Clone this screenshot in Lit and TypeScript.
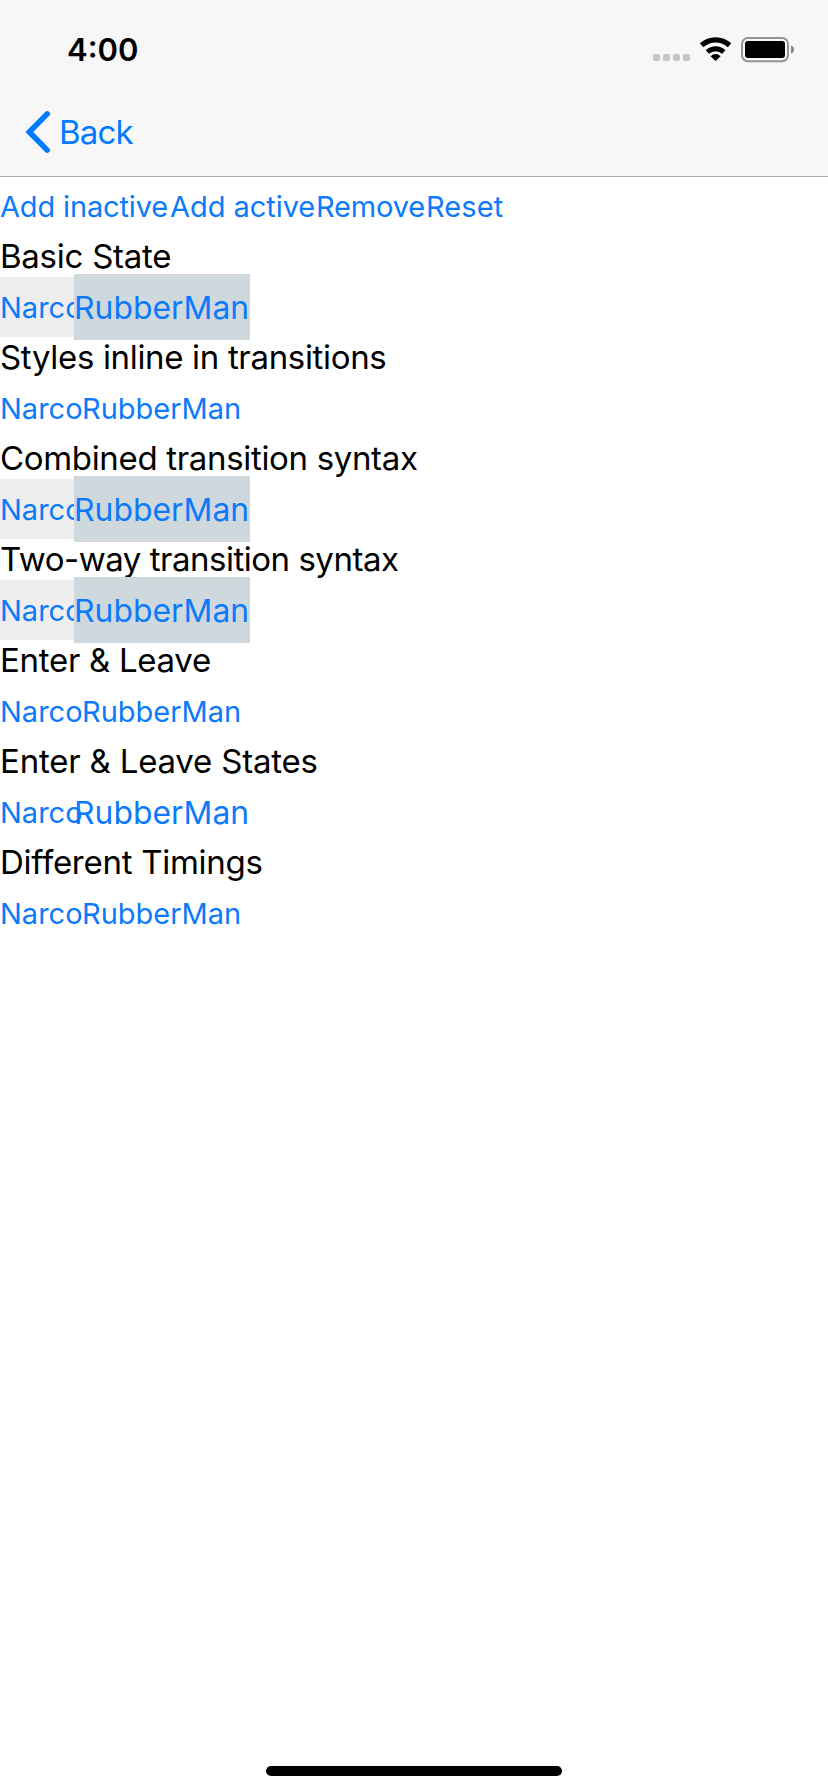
import { LitElement, html, css, nothing } from "lit";
import { customElement, property } from "lit/decorators.js";
import { classMap } from "lit/directives/class-map.js";
import { styleMap } from "lit/directives/style-map.js";

interface Section {
  title: string;
  tracking: number;
  active: boolean;
  filled: boolean;
}

const SECTIONS: Section[] = [
  { title: "Basic State", tracking: -0.25, active: true, filled: true },
  { title: "Styles inline in transitions", tracking: -0.33, active: false, filled: false },
  { title: "Combined transition syntax", tracking: -0.33, active: true, filled: true },
  { title: "Two-way transition syntax", tracking: -0.48, active: true, filled: true },
  { title: "Enter & Leave", tracking: -0.29, active: false, filled: false },
  { title: "Enter & Leave States", tracking: -0.2, active: true, filled: false },
  { title: "Different Timings", tracking: -0.27, active: false, filled: false },
];

const ACTIONS = [
  { label: "Add inactive", width: 170, tracking: -0.15 },
  { label: "Add active", width: 146, tracking: -0.05 },
  { label: "Remove", width: 110, tracking: -0.15 },
  { label: "Reset", width: 80, tracking: 0.1 },
];

@customElement("status-bar")
class StatusBar extends LitElement {
  static styles = css`
    :host {
      display: flex;
      justify-content: space-between;
      height: 88px;
      padding: 0 34px 0 67px;
      box-sizing: border-box;
    }
    .time {
      font-size: 31px;
      font-weight: 600;
      line-height: 40px;
      padding-top: 30px;
    }
    .icons {
      display: flex;
      padding-top: 34px;
    }
    svg {
      display: block;
    }
  `;
  render() {
    return html`
      <div class="time">4:00</div>
      <div class="icons">
        <svg width="144" height="30" viewBox="650 34 144 30">
          <g fill="#c6c6c7">
            <rect x="653" y="54" width="7" height="7" rx="1.8" />
            <rect x="663" y="54" width="7" height="7" rx="1.8" />
            <rect x="673" y="54" width="7" height="7" rx="1.8" />
            <rect x="683" y="54" width="7" height="7" rx="1.8" />
          </g>
          <g fill="none" stroke="#000">
            <path d="M701.6 45.2A20.9 20.9 0 0 1 729.6 45.2" stroke-width="5.2" />
            <path d="M707.4 52A12.2 12.2 0 0 1 723.8 52" stroke-width="5" />
          </g>
          <path d="M715.6 61L710.6 56.2A7 7 0 0 1 720.6 56.2Z" />
          <rect x="742" y="38" width="46" height="23.2" rx="6" fill="none" stroke="#939394" stroke-width="2" />
          <rect x="745" y="41" width="40" height="17" rx="3" />
          <path d="M791 45.5Q794 46.5 794 49.5T791 53.5Z" fill="#848485" />
        </svg>
      </div>
    `;
  }
}

@customElement("nav-bar")
class NavBar extends LitElement {
  static styles = css`
    :host {
      display: flex;
      align-items: center;
      height: 88px;
      padding-left: 24px;
      box-sizing: border-box;
      color: #007aff;
    }
    .back {
      display: flex;
      align-items: center;
      gap: 7px;
      font-size: 33px;
      letter-spacing: -0.85px;
      line-height: 42px;
    }
    svg {
      display: block;
    }
  `;
  render() {
    return html`
      <div class="back">
        <svg width="28" height="44" viewBox="24 110 28 44">
          <path d="M47.2 113.9L29.3 132L47.2 150.1" fill="none" stroke="currentColor" stroke-width="5.6" stroke-linecap="round" />
        </svg>
        <span>Back</span>
      </div>
    `;
  }
}

@customElement("hero-section")
class HeroSection extends LitElement {
  @property({ attribute: false }) section!: Section;
  static styles = css`
    :host {
      display: block;
    }
    .title {
      height: 41px;
      line-height: 41px;
      font-size: 33px;
      white-space: nowrap;
    }
    .heroes {
      display: flex;
      height: 60px;
      line-height: 62px;
      font-size: 29px;
      color: #0c7afa;
    }
    .narco {
      width: 82px;
    }
    .rubber {
      width: 160px;
    }
    .narco.filled {
      background: #eee;
    }
    .rubber.filled {
      background: #cfd8dc;
    }
    .rubber.active {
      transform: scale(1.1);
    }
  `;
  render() {
    const s = this.section;
    if (!s) return nothing;
    return html`
      <div class="title" style=${styleMap({ letterSpacing: `${s.tracking}px` })}>${s.title}</div>
      <div class="heroes">
        <div class=${classMap({ narco: true, filled: s.filled })}>Narco</div>
        <div class=${classMap({ rubber: true, filled: s.filled, active: s.active })}>RubberMan</div>
      </div>
    `;
  }
}

@customElement("app-root")
class AppRoot extends LitElement {
  static styles = css`
    :host {
      display: flex;
      flex-direction: column;
      height: 1792px;
      overflow: hidden;
      background: #fff;
      color: #000;
      font-family: Inter, "Liberation Sans", sans-serif;
    }
    .header {
      background: #f7f7f8;
      border-bottom: 1px solid #adadad;
    }
    .actions {
      display: flex;
      height: 59px;
      line-height: 59px;
      font-size: 29px;
      color: #0c7afa;
      white-space: nowrap;
    }
    .content {
      flex: 1;
    }
    .footer {
      display: flex;
      justify-content: center;
      padding-bottom: 16px;
    }
    .home {
      width: 296px;
      height: 10px;
      border-radius: 5px;
      background: #000;
    }
  `;
  render() {
    return html`
      <div class="header">
        <status-bar></status-bar>
        <nav-bar></nav-bar>
      </div>
      <div class="content">
        <div class="actions">
          ${ACTIONS.map(
            (a) => html`<div style=${styleMap({ width: `${a.width}px`, letterSpacing: `${a.tracking}px` })}>${a.label}</div>`
          )}
        </div>
        ${SECTIONS.map((s) => html`<hero-section .section=${s}></hero-section>`)}
      </div>
      <div class="footer"><div class="home"></div></div>
    `;
  }
}
